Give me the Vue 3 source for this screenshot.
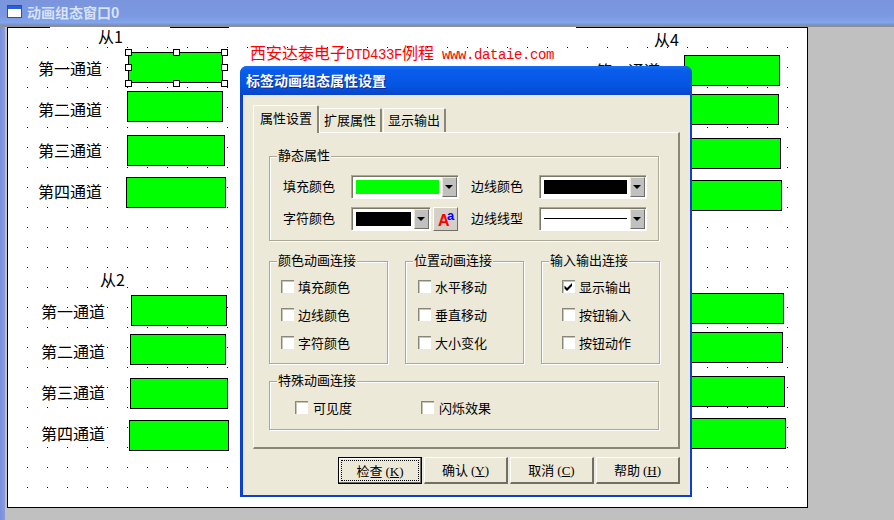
<script setup>
// canvas padding box starts at page (8, 28), data below is in page coordinates
const ox = 8;
const oy = 28;

const boxes = [
  [128, 52, 223, 83], [127, 91, 223, 122], [127, 135, 225, 166], [126, 177, 226, 208],
  [131, 295, 227, 326], [130, 334, 226, 365], [130, 378, 228, 409], [129, 420, 229, 451],
  [684, 55, 780, 86], [683, 94, 779, 125], [685, 138, 781, 169], [686, 180, 782, 211],
  [688, 293, 784, 324], [687, 332, 783, 363], [689, 376, 785, 407], [690, 418, 786, 449],
];

const labels = [
  ['从1', 98, 36], ['第一通道', 38, 68], ['第二通道', 38, 109], ['第三通道', 38, 150], ['第四通道', 38, 191],
  ['从2', 100, 279], ['第一通道', 41, 311], ['第二通道', 41, 351], ['第三通道', 41, 392], ['第四通道', 41, 433],
  ['从4', 654, 39], ['第一通道', 596, 70],
];

const handles = [
  [125, 49], [173, 49], [221, 49],
  [125, 64], [221, 64],
  [125, 80], [173, 80], [221, 80],
];

const boxStyle = ([x1, y1, x2, y2]) => ({
  left: x1 - ox + 'px',
  top: y1 - oy + 'px',
  width: x2 - x1 + 'px',
  height: y2 - y1 + 'px',
});
const labelStyle = ([, x, y]) => ({ left: x - ox + 'px', top: y - 10 - oy + 'px' });
const handleStyle = ([x, y]) => ({ left: x - ox + 'px', top: y - oy + 'px' });

const groups = [
  { title: '颜色动画连接', items: [['填充颜色'], ['边线颜色'], ['字符颜色']], cls: '' },
  { title: '位置动画连接', items: [['水平移动'], ['垂直移动'], ['大小变化']], cls: 'mid' },
  { title: '输入输出连接', items: [['显示输出', true], ['按钮输入'], ['按钮动作']], cls: 'wide' },
];

const buttons = [
  ['检查', 'K', true],
  ['确认', 'Y'],
  ['取消', 'C'],
  ['帮助', 'H'],
];
</script>

<template>
  <div class="window">
    <div class="titlebar">
      <svg class="win-icon" width="15" height="13" viewBox="0 0 15 13">
        <rect x="0.5" y="0.5" width="14" height="12" fill="#fff" stroke="#2a4fb0" />
        <rect x="1" y="1" width="13" height="3" fill="#2a5fd8" />
      </svg>
      <span>动画组态窗口0</span>
    </div>
    <div class="workspace">
      <div class="side"></div>
      <div class="canvas">
        <svg class="dots" width="799" height="479">
          <defs>
            <pattern id="grid" width="20" height="20" patternUnits="userSpaceOnUse">
              <rect x="19" y="19" width="1" height="1" fill="#000" />
            </pattern>
          </defs>
          <rect width="799" height="479" fill="url(#grid)" />
        </svg>
        <div class="edge-gap first"></div>
        <div class="edge-gap second"></div>
        <div v-for="(b, i) in boxes" :key="i" class="box" :style="boxStyle(b)"></div>
        <div v-for="(l, i) in labels" :key="'l' + i" class="label" :style="labelStyle(l)">{{ l[0] }}</div>
        <div v-for="(h, i) in handles" :key="'h' + i" class="handle" :style="handleStyle(h)"></div>
        <div class="note">西安达泰电子<span class="mono">DTD433F</span>例程<span class="mono"> www.dataie.com</span></div>
      </div>
    </div>

    <div class="dialog">
      <div class="dlg-title">标签动画组态属性设置</div>
      <div class="client">
        <div class="tabs">
          <div class="tab active">属性设置</div>
          <div class="tab">扩展属性</div>
          <div class="tab">显示输出</div>
        </div>
        <div class="panel">
          <div class="group static">
            <div class="legend">静态属性</div>
            <div class="static-rows">
              <span class="field-label">填充颜色</span>
              <div class="combo wide">
                <span class="swatch green"></span>
                <span class="arrow"></span>
              </div>
              <span class="field-label right">边线颜色</span>
              <div class="combo wide">
                <span class="swatch black"></span>
                <span class="arrow"></span>
              </div>
              <span class="field-label">字符颜色</span>
              <div class="combo-pair">
                <div class="combo narrow">
                  <span class="swatch black"></span>
                  <span class="arrow"></span>
                </div>
                <div class="font-btn"><span class="big-a">A</span><span class="small-a">a</span></div>
              </div>
              <span class="field-label right">边线线型</span>
              <div class="combo wide">
                <span class="swatch line"></span>
                <span class="arrow"></span>
              </div>
            </div>
          </div>

          <div class="triple">
            <div v-for="g in groups" :key="g.title" class="group">
              <div class="legend">{{ g.title }}</div>
              <div class="checks" :class="g.cls">
                <label v-for="it in g.items" :key="it[0]" class="check">
                  <span class="cb">
                    <svg v-if="it[1]" width="11" height="11" viewBox="0 0 11 11">
                      <path d="M1.5 4.5l2.5 2.5L9 2v3L4 10 1.5 7.5z" fill="#000" />
                    </svg>
                  </span>
                  <span>{{ it[0] }}</span>
                </label>
              </div>
            </div>
          </div>

          <div class="group special">
            <div class="legend">特殊动画连接</div>
            <div class="special-row">
              <label class="check"><span class="cb"></span><span>可见度</span></label>
              <label class="check"><span class="cb"></span><span>闪烁效果</span></label>
            </div>
          </div>
        </div>
        <div class="actions">
          <button v-for="b in buttons" :key="b[0]" class="btn" :class="{ primary: b[2] }">
            <span class="btn-text">{{ b[0] }} <span class="key">(<u>{{ b[1] }}</u>)</span></span>
          </button>
        </div>
      </div>
    </div>
  </div>
</template>

<style>
html,
body {
  margin: 0;
  padding: 0;
}
</style>

<style scoped>
.window {
  position: relative;
  width: 894px;
  height: 520px;
  overflow: hidden;
  background: #c0c0c0;
  font-family: "Noto Sans CJK SC", "Liberation Sans", sans-serif;
  font-size: 13px;
  color: #000;
}
.titlebar {
  height: 27px;
  box-sizing: border-box;
  border-bottom: 2px solid #8f8f8f;
  padding: 0 0 2px 7px;
  display: flex;
  align-items: center;
  gap: 5px;
  background: linear-gradient(#7b95dd, #7a98e0 60%, #82a4ea 90%, #7a90c8);
  color: #d8e2f8;
  font-size: 14px;
  font-weight: 700;
}
.workspace {
  display: flex;
  height: 493px;
}
.side {
  width: 5px;
  height: 100%;
  margin-right: 2px;
  background: linear-gradient(90deg, #7a8fd8, #8a9ae0);
}
.canvas {
  position: relative;
  width: 799px;
  height: 479px;
  border: 1px solid #000;
  background: #fff;
}
.edge-gap {
  position: absolute;
  top: -1px;
  height: 1px;
  background: #fff;
}
.edge-gap.first {
  left: 42px;
  width: 120px;
}
.edge-gap.second {
  left: 221px;
  width: 347px;
}
.dots {
  position: absolute;
  left: 0;
  top: 0;
}
.box {
  position: absolute;
  box-sizing: border-box;
  border: 1px solid #000;
  background: #00ff00;
}
.label {
  position: absolute;
  font-size: 16px;
  line-height: 20px;
  white-space: nowrap;
}
.handle {
  position: absolute;
  box-sizing: border-box;
  width: 7px;
  height: 7px;
  border: 1px solid #000;
  background: #fff;
}
.note {
  position: absolute;
  left: 242px;
  top: 14px;
  font-size: 16px;
  line-height: 20px;
  color: #ff0000;
  white-space: pre;
}
.mono {
  font-family: "Liberation Mono", monospace;
  font-size: 14px;
  letter-spacing: -0.4px;
}

.dialog {
  position: absolute;
  left: 240px;
  top: 66px;
  width: 452px;
  height: 431px;
  box-sizing: border-box;
  padding: 0 2px 2px 3px;
  border-radius: 7px 7px 0 0;
  background: #0a3fd0;
}
.dlg-title {
  height: 29px;
  margin: 0 -2px 0 -3px;
  padding-left: 6px;
  border-radius: 7px 7px 0 0;
  background: linear-gradient(#1a6ff0, #0a5cec 15%, #0455e0 70%, #0a44c8);
  color: #fff;
  font-size: 14px;
  font-weight: 700;
  line-height: 28px;
  text-shadow: 1px 1px 0 #0a2a90;
}
.client {
  height: 400px;
  box-sizing: border-box;
  padding: 10px 10px 0;
  background: #ece9d8;
}
.tabs {
  display: flex;
  align-items: flex-end;
  height: 27px;
  position: relative;
  z-index: 1;
}
.tab {
  height: 24px;
  box-sizing: border-box;
  padding: 0 4px;
  margin-right: 1px;
  line-height: 21px;
  border: 1px solid #fff;
  border-right: 2px solid #8a8778;
  border-bottom: none;
  border-radius: 2px 2px 0 0;
}
.tab.active {
  height: 28px;
  padding: 0 5px 0 6px;
  margin-right: 0;
  margin-bottom: -1px;
  background: #ece9d8;
  line-height: 23px;
}
.panel {
  width: 427px;
  height: 317px;
  box-sizing: border-box;
  padding: 23px 19px 0 15px;
  border: 1px solid #fff;
  border-right: 2px solid #8a8778;
  border-bottom: 2px solid #8a8778;
  display: flex;
  flex-direction: column;
}
.group {
  box-sizing: border-box;
  border: 1px solid #aca899;
  box-shadow: 1px 1px 0 #fff, inset 1px 1px 0 #fff;
}
.legend {
  width: fit-content;
  margin: -11px 0 0 7px;
  padding: 0 1px;
  background: #ece9d8;
  line-height: 17px;
  white-space: nowrap;
}
.static {
  height: 85px;
}
.static-rows {
  display: grid;
  grid-template-columns: 68px 107px 81px 107px;
  grid-auto-rows: 23px;
  row-gap: 9px;
  align-items: center;
  padding: 12px 0 0 13px;
}
.field-label {
  margin-top: -2px;
}
.field-label.right {
  padding-left: 13px;
}
.combo {
  box-sizing: border-box;
  height: 23px;
  padding: 1px;
  background: #fff;
  display: flex;
  align-items: stretch;
  border-top: 1px solid #aca899;
  border-left: 1px solid #aca899;
  box-shadow: inset 1px 1px 0 #7a7768, 1px 1px 0 #fff;
}
.combo.wide {
  width: 107px;
}
.combo.narrow {
  width: 79px;
}
.combo-pair {
  display: flex;
  gap: 3px;
}
.swatch {
  flex: 1;
  margin: 3px;
}
.swatch.green {
  background: #00ff00;
}
.swatch.black {
  background: #000;
}
.swatch.line {
  height: 1px;
  margin-top: 9px;
  background: #000;
}
.arrow {
  position: relative;
  width: 15px;
  box-sizing: border-box;
  background: #c0c0c0;
  border-top: 1px solid #ece9d8;
  border-left: 1px solid #ece9d8;
  border-right: 1px solid #716f64;
  border-bottom: 1px solid #716f64;
}
.arrow::after {
  content: "";
  position: absolute;
  left: 2px;
  top: 7px;
  border-style: solid;
  border-width: 4px 4px 0;
  border-color: #000 transparent transparent;
}
.font-btn {
  position: relative;
  width: 25px;
  height: 24px;
  box-sizing: border-box;
  background: #d4d0c8;
  border-top: 1px solid #fff;
  border-left: 1px solid #fff;
  border-right: 1px solid #716f64;
  border-bottom: 1px solid #716f64;
  font-family: "Liberation Sans", sans-serif;
  font-weight: 700;
}
.big-a {
  position: absolute;
  left: 4px;
  top: 4px;
  color: #ff0000;
  font-size: 16px;
  line-height: 17px;
}
.small-a {
  position: absolute;
  left: 13px;
  top: 1px;
  color: #0000ff;
  font-size: 13px;
  line-height: 13px;
}
.triple {
  display: grid;
  grid-template-columns: repeat(3, 119px);
  column-gap: 17px;
  margin-top: 20px;
}
.triple .group {
  height: 103px;
}
.checks {
  display: flex;
  flex-direction: column;
  gap: 11px;
  padding: 10px 0 0 11px;
}
.checks.mid {
  padding-left: 12px;
}
.checks.wide {
  padding-left: 20px;
}
.check {
  display: flex;
  align-items: center;
  gap: 4px;
  height: 17px;
  white-space: nowrap;
}
.cb {
  width: 13px;
  height: 13px;
  box-sizing: border-box;
  flex: none;
  background: #fff;
  border-top: 1px solid #8a8778;
  border-left: 1px solid #8a8778;
  box-shadow: inset 1px 1px 0 #c8c5b4;
  display: flex;
}
.special {
  height: 49px;
  margin-top: 17px;
}
.special-row {
  display: grid;
  grid-template-columns: 126px auto;
  padding: 11px 0 0 25px;
}
.special-row .check {
  gap: 5px;
}
.actions {
  display: flex;
  justify-content: flex-end;
  gap: 2px;
  margin-top: 8px;
}
.btn {
  width: 84px;
  height: 27px;
  box-sizing: border-box;
  padding: 0;
  font: inherit;
  color: #000;
  background: #ece9d8;
  border-top: 1px solid #fff;
  border-left: 1px solid #fff;
  border-right: 2px solid #716f64;
  border-bottom: 2px solid #716f64;
}
.btn.primary {
  border: 1px solid #000;
  padding: 2px;
  box-shadow: inset -1px -1px 0 #716f64, inset 1px 1px 0 #fff;
}
.btn-text {
  display: block;
  line-height: 20px;
}
.btn.primary .btn-text {
  height: 19px;
  border: 1px dotted #000;
}
.key {
  font-family: "Liberation Serif", serif;
}
</style>
